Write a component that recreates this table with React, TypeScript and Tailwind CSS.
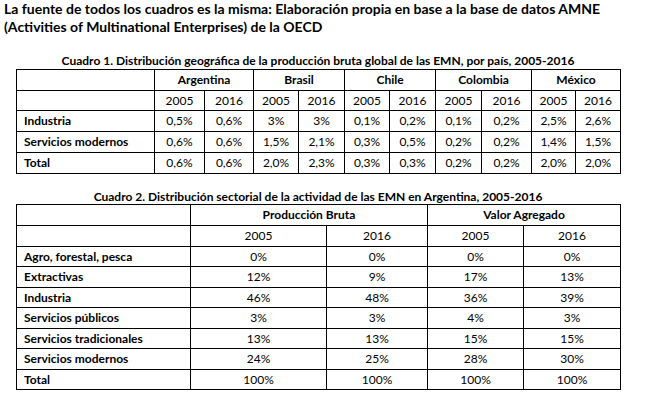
import React from "react";

const font = { fontFamily: "Lato, 'Open Sans', sans-serif" };

const t1Widths = [138, 50, 49, 45, 46, 45, 46, 46, 50, 44, 45];
const countries = ["Argentina", "Brasil", "Chile", "Colombia", "México"];
const t1Rows: [string, string[]][] = [
  ["Industria", ["0,5%", "0,6%", "3%", "3%", "0,1%", "0,2%", "0,1%", "0,2%", "2,5%", "2,6%"]],
  ["Servicios modernos", ["0,6%", "0,6%", "1,5%", "2,1%", "0,3%", "0,5%", "0,2%", "0,2%", "1,4%", "1,5%"]],
  ["Total", ["0,6%", "0,6%", "2,0%", "2,3%", "0,3%", "0,3%", "0,2%", "0,2%", "2,0%", "2,0%"]],
];

const t2Widths = [174, 136, 101, 96, 97];
const t2Rows: [string, string[]][] = [
  ["Agro, forestal, pesca", ["0%", "0%", "0%", "0%"]],
  ["Extractivas", ["12%", "9%", "17%", "13%"]],
  ["Industria", ["46%", "48%", "36%", "39%"]],
  ["Servicios públicos", ["3%", "3%", "4%", "3%"]],
  ["Servicios tradicionales", ["13%", "13%", "15%", "15%"]],
  ["Servicios modernos", ["24%", "25%", "28%", "30%"]],
  ["Total", ["100%", "100%", "100%", "100%"]],
];

const td = "border border-black p-0 text-center leading-none";

export default function App() {
  return (
    <div className="w-[647px] h-[402px] bg-white text-black overflow-hidden" style={font}>
      <div className="pl-[4px] pt-0 text-[14px] font-bold leading-[18px]">
        <div>La fuente de todos los cuadros es la misma: Elaboración propia en base a la base de datos AMNE</div>
        <div>(Activities of Multinational Enterprises) de la OECD</div>
      </div>

      <div className="mt-[18px] text-center text-[12px] font-bold leading-[14px] w-[604px] ml-[16px]">
        Cuadro 1. Distribución geográfica de la producción bruta global de las EMN, por país, 2005-2016
      </div>
      <table className="ml-[16px] mt-[1px] border-collapse table-fixed w-[604px] text-[12px]">
        <colgroup>
          {t1Widths.map((w, i) => (
            <col key={i} style={{ width: w }} />
          ))}
        </colgroup>
        <tbody>
          <tr className="h-[21px]">
            <td className={td}></td>
            {countries.map((c) => (
              <td key={c} colSpan={2} className={td + " font-bold"}>
                {c}
              </td>
            ))}
          </tr>
          <tr className="h-[20px]">
            <td className={td}></td>
            {countries.flatMap((c) => [
              <td key={c + "a"} className={td}>2005</td>,
              <td key={c + "b"} className={td}>2016</td>,
            ])}
          </tr>
          {t1Rows.map(([label, vals]) => (
            <tr key={label} className="h-[21px]">
              <td className={td + " text-left pl-[7px] font-bold"}>{label}</td>
              {vals.map((v, i) => (
                <td key={i} className={td}>{v}</td>
              ))}
            </tr>
          ))}
        </tbody>
      </table>

      <div className="mt-[16px] text-center text-[12px] font-bold leading-[14px] w-[604px] ml-[16px]">
        Cuadro 2. Distribución sectorial de la actividad de las EMN en Argentina, 2005-2016
      </div>
      <table className="ml-[16px] mt-[0px] border-collapse table-fixed w-[604px] text-[12px]">
        <colgroup>
          {t2Widths.map((w, i) => (
            <col key={i} style={{ width: w }} />
          ))}
        </colgroup>
        <tbody>
          <tr className="h-[21px]">
            <td className={td}></td>
            <td colSpan={2} className={td + " font-bold"}>Producción Bruta</td>
            <td colSpan={2} className={td + " font-bold"}>Valor Agregado</td>
          </tr>
          <tr className="h-[21px]">
            <td className={td}></td>
            <td className={td}>2005</td>
            <td className={td}>2016</td>
            <td className={td}>2005</td>
            <td className={td}>2016</td>
          </tr>
          {t2Rows.map(([label, vals], r) => (
            <tr key={label} className={r % 2 === 0 ? "h-[20px]" : "h-[21px]"}>
              <td className={td + " text-left pl-[7px] font-bold"}>{label}</td>
              {vals.map((v, i) => (
                <td key={i} className={td}>{v}</td>
              ))}
            </tr>
          ))}
        </tbody>
      </table>
    </div>
  );
}
